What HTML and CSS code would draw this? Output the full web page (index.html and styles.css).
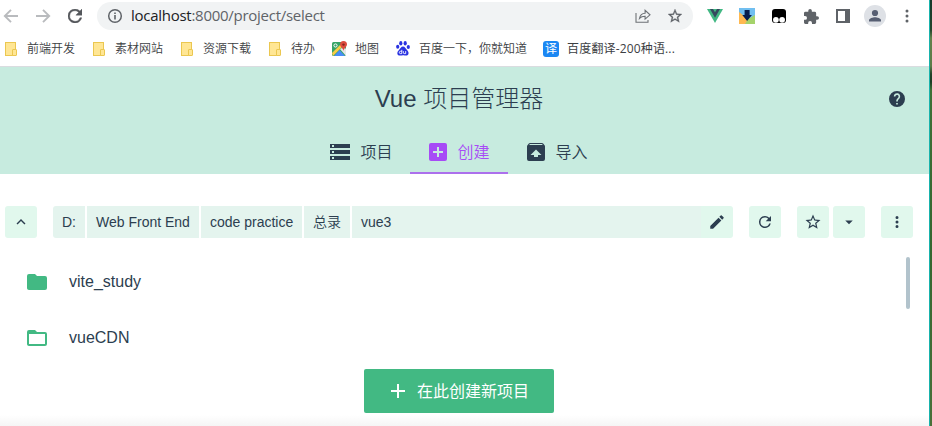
FILE: index.html
```html
<!DOCTYPE html>
<html lang="zh-CN">
<head>
<meta charset="utf-8">
<title>Vue 项目管理器</title>
<link rel="stylesheet" href="styles.css">
</head>
<body>
<div class="window">
  <div class="toolbar">
    <span class="cell nav first"><svg viewBox="0 0 16 16" width="16" height="16"><path d="M15 8H2M8 1.8 1.8 8 8 14.2" fill="none" stroke="#b9bbbe" stroke-width="1.9"/></svg></span>
    <span class="cell nav"><svg viewBox="0 0 16 16" width="16" height="16"><path d="M1 8h13M8 1.8 14.2 8 8 14.2" fill="none" stroke="#b9bbbe" stroke-width="1.9"/></svg></span>
    <span class="cell nav"><svg viewBox="4 4 16 16" width="14" height="14"><path fill="#54575b" stroke="#54575b" stroke-width=".5" d="M17.65 6.35A7.96 7.96 0 0 0 12 4a8 8 0 1 0 7.73 10h-2.08A6 6 0 1 1 12 6c1.66 0 3.14.69 4.22 1.78L13 11h7V4z"/></svg></span>
    <div class="address">
      <svg class="info" viewBox="0 0 16 16" width="16" height="16"><circle cx="8" cy="8" r="6.3" fill="none" stroke="#5f6368" stroke-width="1.5"/><path d="M7.2 7.1h1.6v4.4H7.2zM7.2 4.4h1.6V6H7.2z" fill="#5f6368"/></svg>
      <span class="url"><b>localhost</b>:8000/project/select</span>
      <span class="cell"><svg viewBox="0 0 16 16" width="16" height="16"><path d="M1 5v9.300h12V12M4.500 10.400c.600-3.500 2.500-5.100 5.600-5.200V2.300L15 6.800l-4.900 4.300V8.300c-2.500 0-4.300.600-5.600 2.100z" fill="none" stroke="#6d7176" stroke-width="1.100"/></svg></span>
      <span class="cell"><svg viewBox="2 2 20 20" width="14" height="14"><path fill="#5f6368" stroke="#5f6368" stroke-width=".4" d="m22 9.24-7.19-.62L12 2 9.19 8.63 2 9.24l5.46 4.73L5.82 21 12 17.27 18.18 21l-1.63-7.03zM12 15.4l-3.76 2.27 1-4.28-3.32-2.88 4.38-.38L12 6.1l1.71 4.04 4.38.38-3.32 2.88 1 4.28z"/></svg></span>
    </div>
    <div class="extensions">
      <span class="cell"><svg viewBox="0 0 16 14" width="16" height="14"><path fill="#41b883" d="M0 0h16L8 14z"/><path fill="#35495e" d="M3 0h3l2 3.2L10 0h3L8 8.7z"/></svg></span>
      <span class="cell"><svg viewBox="0 0 16 16" width="16" height="16"><path fill="#71bff0" d="M0 0h16v16H0z"/><path fill="#a5d36b" d="M16 7v9H5l4-5z"/><path fill="#ffb951" d="M0 16h6l3-5-9-7z"/><path fill="#071d4c" d="M5.600 2h5v5h2.300l-4.800 6-4.800-6h2.300z"/></svg></span>
      <span class="cell pad"><svg viewBox="0 0 14 14" width="14" height="14"><rect width="14" height="14" rx="3" fill="#000"/><circle cx="3.900" cy="10.800" r="2.900" fill="#fff"/><circle cx="10.100" cy="10.800" r="2.900" fill="#fff"/></svg></span>
      <span class="cell"><svg viewBox="2 1 21 21" width="15" height="15"><path fill="#5f6368" d="M20.500 11H19V7a2 2 0 0 0-2-2h-4V3.500a2.500 2.500 0 0 0-5 0V5H4a2 2 0 0 0-2 2v3.800h1.500a2.700 2.700 0 0 1 0 5.400H2V20a2 2 0 0 0 2 2h3.800v-1.500a2.700 2.700 0 0 1 5.400 0V22H17a2 2 0 0 0 2-2v-4h1.500a2.500 2.500 0 0 0 0-5z"/></svg></span>
      <span class="cell"><svg viewBox="0 0 14 14" width="14" height="14"><path fill="#5f6368" fill-rule="evenodd" d="M0 0h14v14H0zM2 2v10h7V2z"/></svg></span>
      <span class="cell"><svg viewBox="0 0 22 22" width="22" height="22"><circle cx="11" cy="11" r="11" fill="#dee1e6"/><circle cx="11" cy="8" r="3.100" fill="#575f73"/><path fill="#575f73" d="M5 16.500v-1.300c0-2 4-3 6-3s6 1 6 3v1.300z"/></svg></span>
      <span class="cell"><svg viewBox="0 0 4 14" width="4" height="14" fill="#5f6368"><circle cx="2" cy="2" r="1.500"/><circle cx="2" cy="7" r="1.500"/><circle cx="2" cy="12" r="1.500"/></svg></span>
    </div>
  </div>

  <div class="bookmarks">
    <span class="mark"><i class="dir"></i>前端开发</span>
    <span class="mark"><i class="dir"></i>素材网站</span>
    <span class="mark"><i class="dir"></i>资源下载</span>
    <span class="mark"><i class="dir"></i>待办</span>
    <span class="mark map"><svg viewBox="0 0 16 16" width="16" height="16"><rect y="1" width="14" height="14" rx="1.500" fill="#35a365"/><path fill="#e8e8e8" d="m8 8 4-2 2 2v7z"/><path fill="#4a8df6" d="m2 15 5.500-6L13 15z"/><path fill="#f8cc46" d="m0 12 9-9 1.500 2.500L1 15z"/><circle cx="3.500" cy="4.500" r="1.600" fill="none" stroke="#fff"/><path fill="#dd4b3e" d="M11.500 0A3.600 3.600 0 0 0 8 3.600C8 6 11 7 11.500 10c.500-3 3.500-4 3.500-6.400A3.600 3.600 0 0 0 11.500 0z"/><circle cx="11.500" cy="3.600" r="1.200" fill="#84251e"/></svg>地图</span>
    <span class="mark baidu"><svg viewBox="0 0 14 15" width="14" height="15"><g fill="#2932e1"><ellipse cx="4.800" cy="2.300" rx="1.600" ry="2.200"/><ellipse cx="9.200" cy="2.300" rx="1.600" ry="2.200"/><ellipse cx="1.700" cy="5.700" rx="1.600" ry="2"/><ellipse cx="12.300" cy="5.900" rx="1.600" ry="2"/><path d="M7 5.600c2 0 2.500 2 4 3.300 2.600 2.400 1.700 5.600-.800 5.700-1.300 0-2-.300-3.200-.300s-2 .400-3.200.300C.900 14.500.500 11.300 3 9c1.500-1.300 2-3.400 4-3.400z"/></g><path d="M5.800 8.800v3.800H4.300c-1.300 0-1.300-2.300 0-2.300h1.500M7.400 10.200v1.600c0 .500.300.800.800.800h1.500v-2.500" fill="none" stroke="#fff" stroke-width=".9"/></svg>百度一下，你就知道</span>
    <span class="mark yi"><i class="translate">译</i>百度翻译-200种语...</span>
  </div>

  <header class="head">
    <div class="title-row">
      <h1>Vue <span>项目管理器</span></h1>
      <svg class="help" viewBox="2 2 20 20" width="16" height="16"><path fill="#2c3e50" d="M12 2a10 10 0 1 0 0 20 10 10 0 0 0 0-20zm1 17h-2v-2h2zm2.070-7.750-.900.920C13.450 12.900 13 13.500 13 15h-2v-.500c0-1.100.450-2.100 1.170-2.830l1.240-1.260A2 2 0 1 0 10 9H8a4 4 0 1 1 7.070 2.250z"/></svg>
    </div>
    <nav class="tabs">
      <a class="tab"><svg viewBox="2 4 20 16" width="20" height="16"><path fill="#2c3e50" d="M2 20h20v-4H2zm2-3h2v2H4zM2 4v4h20V4zm4 3H4V5h2zm-4 7h20v-4H2zm2-3h2v2H4z"/></svg><span>项目</span></a>
      <a class="tab active"><svg viewBox="3 3 18 18" width="18" height="18"><path fill="#a74bf6" d="M19 3H5a2 2 0 0 0-2 2v14c0 1.100.900 2 2 2h14a2 2 0 0 0 2-2V5a2 2 0 0 0-2-2zm-2 10h-4v4h-2v-4H7v-2h4V7h2v4h4z"/></svg><span>创建</span></a>
      <a class="tab"><svg viewBox="3 3 18 18" width="18" height="18"><path fill="#2c3e50" d="m20.550 5.220-1.390-1.680C18.880 3.210 18.470 3 18 3H6c-.470 0-.880.210-1.150.550L3.460 5.220C3.170 5.570 3 6.010 3 6.500V19a2 2 0 0 0 2 2h14a2 2 0 0 0 2-2V6.500c0-.490-.170-.930-.450-1.280zM12 9.500l5.500 5.500H14v2h-4v-2H6.500zM5.120 5l.820-1h12l.930 1z"/></svg><span>导入</span></a>
    </nav>
  </header>

  <main class="content">
    <div class="path-row">
      <button class="btn"><svg viewBox="0 0 24 24" width="18" height="18"><path fill="#2c3e50" d="m12 8-6 6 1.410 1.410L12 10.830l4.590 4.580L18 14z"/></svg></button>
      <div class="crumbs">
        <span class="c1">D:</span><span class="c2">Web Front End</span><span class="c3">code practice</span><span class="c4">总录</span><span class="c5">vue3</span>
        <button class="btn edit"><svg viewBox="0 0 24 24" width="18" height="18"><path fill="#2c3e50" d="M3 17.250V21h3.750L17.810 9.940l-3.750-3.750zM20.710 7.040a1 1 0 0 0 0-1.410l-2.340-2.340a1 1 0 0 0-1.410 0l-1.830 1.830 3.750 3.750z"/></svg></button>
      </div>
      <button class="btn"><svg viewBox="0 0 24 24" width="18" height="18"><path fill="#2c3e50" d="M17.650 6.350A7.960 7.960 0 0 0 12 4a8 8 0 1 0 7.730 10h-2.080A6 6 0 1 1 12 6c1.660 0 3.140.690 4.220 1.780L13 11h7V4z"/></svg></button>
      <div class="pair">
        <button class="btn"><svg viewBox="0 0 24 24" width="18" height="18"><path fill="#2c3e50" d="m22 9.240-7.190-.620L12 2 9.190 8.630 2 9.240l5.460 4.730L5.820 21 12 17.270 18.180 21l-1.630-7.030zM12 15.400l-3.760 2.270 1-4.280-3.320-2.880 4.380-.380L12 6.100l1.710 4.040 4.380.380-3.320 2.880 1 4.280z"/></svg></button>
        <button class="btn"><svg viewBox="0 0 24 24" width="18" height="18"><path fill="#2c3e50" d="m7 10 5 5 5-5z"/></svg></button>
      </div>
      <button class="btn"><svg viewBox="0 0 24 24" width="18" height="18"><path fill="#2c3e50" d="M12 8a2 2 0 1 0 0-4 2 2 0 0 0 0 4zm0 2a2 2 0 1 0 0 4 2 2 0 0 0 0-4zm0 6a2 2 0 1 0 0 4 2 2 0 0 0 0-4z"/></svg></button>
    </div>
    <div class="folders">
      <div class="list">
        <div class="folder"><svg viewBox="2 4 20 16" width="20" height="16"><path fill="#42b983" d="M10 4H4a2 2 0 0 0-2 2v12c0 1.100.900 2 2 2h16a2 2 0 0 0 2-2V8a2 2 0 0 0-2-2h-8z"/></svg>vite_study</div>
        <div class="folder"><svg viewBox="2 4 20 16" width="20" height="16"><path fill="#42b983" d="M20 6h-8l-2-2H4a2 2 0 0 0-2 2v12c0 1.100.900 2 2 2h16a2 2 0 0 0 2-2V8a2 2 0 0 0-2-2zm0 12H4V8h16z"/></svg>vueCDN</div>
      </div>
      <div class="thumb"></div>
    </div>
    <div class="actions">
      <button class="create"><svg viewBox="5 5 14 14" width="14" height="14"><path fill="#fff" d="M19 13h-6v6h-2v-6H5v-2h6V5h2v6h6z"/></svg><span>在此创建新项目</span></button>
    </div>
    <div class="shade"></div>
  </main>
</div>
<div class="desktop"></div>
</body>
</html>
```

FILE: styles.css
```css
* { box-sizing: border-box; }
body {
  margin: 0;
  width: 932px;
  height: 426px;
  display: flex;
  overflow: hidden;
  background: #fff;
  color: #2c3e50;
  font-family: "Liberation Sans", "Noto Sans CJK SC", sans-serif;
}
svg { display: block; flex: none; }
button { border: 0; padding: 0; margin: 0; font: inherit; color: inherit; }
.window { width: 929px; height: 426px; display: flex; flex-direction: column; }
.desktop {
  width: 3px;
  border-left: 1px solid #18b3ac;
  background: linear-gradient(#17392b 0, #24452c 30px, #63804b 38px, #5d7c48 66px, #23442a 74px, #1c3d24 82px, #3f7036 90px, #35672f 250px, #4a7039 426px);
}

.toolbar { height: 32px; display: flex; align-items: center; }
.cell { width: 32px; height: 32px; flex: none; display: flex; align-items: center; justify-content: center; }
.cell.pad { padding-right: 1px; }
.nav.first { width: 27px; padding-right: 5px; }
.toolbar .address {
  width: 596px;
  height: 28px;
  margin-left: 6px;
  padding: 0 2px 0 10px;
  border-radius: 14px;
  background: #f1f3f4;
  display: flex;
  align-items: center;
}
.url {
  flex: 1;
  margin-left: 8px;
  padding-bottom: 1px;
  font: 15px/27px "Open Sans", sans-serif;
  letter-spacing: -0.27px;
  color: #5f6368;
  white-space: nowrap;
}
.url b { font-weight: 400; color: #202124; }
.extensions { display: flex; margin-left: 6px; }

.bookmarks {
  height: 35px;
  border-bottom: 1px solid #dadce0;
  padding: 0 0 1px 5px;
  display: flex;
  align-items: center;
  gap: 18px;
  font: 350 12px/20px "Noto Sans", "Noto Sans CJK SC", sans-serif;
  color: #3c4043;
}
.mark { display: flex; align-items: center; white-space: nowrap; }
.dir {
  width: 11px;
  height: 14px;
  margin-right: 11px;
  border: 1px solid #ebc750;
  background: #ffe694;
  position: relative;
}
.dir::after {
  content: "";
  position: absolute;
  right: -2px;
  bottom: -1px;
  width: 3px;
  height: 5px;
  border: 1px solid #ebc750;
  border-radius: 1px;
  background: #ffe694;
}
.map { margin-left: -1px; }
.map svg { margin-right: 7px; }
.baidu { margin-left: -1px; }
.baidu svg { margin-right: 9px; }
.yi { margin-left: -2px; font-family: "Open Sans", "Noto Sans CJK SC", sans-serif; font-weight: 400; letter-spacing: 0.15px; }
.translate {
  width: 16px;
  height: 16px;
  margin-right: 8px;
  border-radius: 3px;
  background: #1b87f3;
  color: #fff;
  font-style: normal;
  line-height: 15px;
  text-align: center;
}

.head { height: 107px; background: #c7ebdf; }
.title-row { width: 918px; height: 64px; padding-bottom: 2px; display: flex; justify-content: center; align-items: center; position: relative; }
.title-row h1 { margin: 0; font-size: 24px; line-height: 32px; font-weight: 400; }
.title-row h1 span { font-family: "Noto Sans CJK SC", sans-serif; font-weight: 300; }
.help { position: absolute; right: 13px; top: 24px; }
.tabs { width: 918px; height: 43px; display: flex; justify-content: center; font-size: 16px; font-weight: 350; }
.tab {
  width: 98px;
  height: 43px;
  border-bottom: 2px solid transparent;
  display: flex;
  align-items: center;
  justify-content: center;
  gap: 10px;
}
.tab span { padding-bottom: 2px; }
.tab svg + span { margin-right: -1px; }
.tab.active { color: #a74bf6; border-color: #ac70ec; }

.content { height: 252px; padding-top: 32px; display: flex; flex-direction: column; }
.path-row { padding-left: 5px; height: 32px; display: flex; gap: 16px; }
.btn {
  width: 32px;
  height: 32px;
  flex: none;
  border-radius: 3px;
  background: #e1f8ed;
  display: flex;
  align-items: center;
  justify-content: center;
}
.pair { display: flex; gap: 4px; }
.crumbs { width: 680px; display: flex; font-size: 14px; line-height: 32px; border-radius: 3px; overflow: hidden; }
.crumbs span { background: #e4f4ee; padding-left: 9px; margin-right: 2px; white-space: nowrap; }
.crumbs .c1 { width: 32px; }
.crumbs .c2 { width: 112px; }
.crumbs .c3 { width: 101px; }
.crumbs .c4 { width: 46px; font-weight: 350; }
.crumbs .c5 { flex: 1; margin-right: 0; }
.edit { border-radius: 0; }
.folders { height: 128px; padding-top: 16px; display: flex; }
.list { width: 906px; }
.folder { height: 56px; padding-left: 27px; display: flex; align-items: center; gap: 22px; font-size: 16px; }
.thumb { width: 4px; height: 52px; margin-top: 3px; border-radius: 2px; background: #b2c3cc; }
.actions { width: 918px; padding-top: 3px; display: flex; justify-content: center; }
.create {
  width: 190px;
  height: 44px;
  border-radius: 2px;
  background: #42b983;
  color: #fff;
  font-size: 16px;
  padding-left: 27px;
  display: flex;
  align-items: center;
  gap: 12px;
}
.create span { padding-bottom: 2px; }
.shade { height: 13px; background: linear-gradient(#fff 2px, #f5f5f5); }
```
